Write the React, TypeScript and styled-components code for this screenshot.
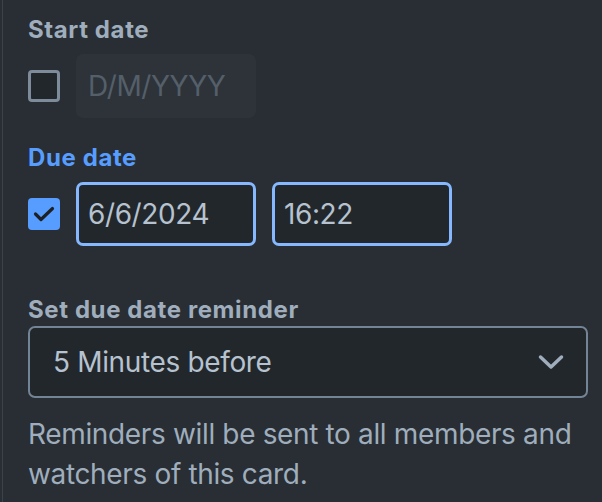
import styled, { createGlobalStyle } from "styled-components";

const GlobalStyle = createGlobalStyle`
  html, body {
    margin: 0;
    padding: 0;
    background: #282e33;
  }
  body {
    font-family: Inter, "Liberation Sans", sans-serif;
    -webkit-font-smoothing: antialiased;
  }
`;

const Panel = styled.div`
  margin-left: 2px;
  height: 502px;
  box-sizing: border-box;
  border-left: 1px solid #3a424a;
  padding: 14px 14px 0 25px;
`;

const Section = styled.div<{ $gap?: number }>`
  margin-top: ${(p) => p.$gap ?? 0}px;
`;

const Label = styled.div<{ $active?: boolean; $tight?: boolean }>`
  font-size: 24px;
  line-height: 32px;
  font-weight: 700;
  letter-spacing: 0.6px;
  color: ${(p) => (p.$active ? "#579dff" : "#9fadbc")};
  margin-bottom: ${(p) => (p.$tight ? 0 : 8)}px;
`;

const Row = styled.div`
  display: flex;
  align-items: center;
  gap: 16px;
  height: 64px;
`;

const Checkbox = styled.span<{ $checked?: boolean }>`
  width: 32px;
  height: 32px;
  box-sizing: border-box;
  border-radius: 4px;
  display: flex;
  align-items: center;
  justify-content: center;
  flex-shrink: 0;
  background: ${(p) => (p.$checked ? "#579dff" : "#22272b")};
  border: ${(p) => (p.$checked ? "none" : "3px solid #7d8b9a")};
`;

const Field = styled.input<{ $focused?: boolean }>`
  width: 180px;
  height: 64px;
  box-sizing: border-box;
  border-radius: 7px;
  padding: 0 9px;
  font-family: inherit;
  font-size: 28px;
  letter-spacing: -0.4px;
  color: #b6c2cf;
  outline: none;
  background: ${(p) => (p.$focused ? "#22272b" : "#2d3339")};
  border: 3px solid ${(p) => (p.$focused ? "#85b8ff" : "transparent")};

  &::placeholder {
    color: #545f6a;
  }
`;

const Select = styled.div`
  height: 72px;
  box-sizing: border-box;
  border: 2px solid #738496;
  border-radius: 7px;
  background: #22272b;
  display: flex;
  align-items: center;
  justify-content: space-between;
  padding: 0 22px 0 23px;
  font-size: 28px;
  letter-spacing: -0.35px;
  color: #b6c2cf;
`;

const Helper = styled.p`
  margin: 16px 0 0;
  font-size: 28px;
  line-height: 40px;
  letter-spacing: -0.35px;
  color: #9fadbc;
`;

const CheckMark = () => (
  <svg width="22" height="16" viewBox="0 0 22 16" fill="none">
    <path
      d="M2.5 8 L8 13.5 L19.5 2.5"
      stroke="#1d2125"
      strokeWidth="3.2"
      strokeLinecap="round"
      strokeLinejoin="round"
    />
  </svg>
);

const Chevron = () => (
  <svg width="26" height="16" viewBox="0 0 26 16" fill="none">
    <path
      d="M2.5 3 L13 13 L23.5 3"
      stroke="#9fadbc"
      strokeWidth="3.5"
      strokeLinecap="round"
      strokeLinejoin="round"
    />
  </svg>
);

export default function App() {
  return (
    <>
      <GlobalStyle />
      <Panel>
        <Section>
          <Label>Start date</Label>
          <Row>
            <Checkbox />
            <Field placeholder="D/M/YYYY" disabled />
          </Row>
        </Section>

        <Section $gap={24}>
          <Label $active>Due date</Label>
          <Row>
            <Checkbox $checked>
              <CheckMark />
            </Checkbox>
            <Field $focused value="6/6/2024" readOnly />
            <Field $focused value="16:22" readOnly />
          </Row>
        </Section>

        <Section $gap={48}>
          <Label $tight>Set due date reminder</Label>
          <Select>
            <span>5 Minutes before</span>
            <Chevron />
          </Select>
          <Helper>
            Reminders will be sent to all members and
            <br />
            watchers of this card.
          </Helper>
        </Section>
      </Panel>
    </>
  );
}
